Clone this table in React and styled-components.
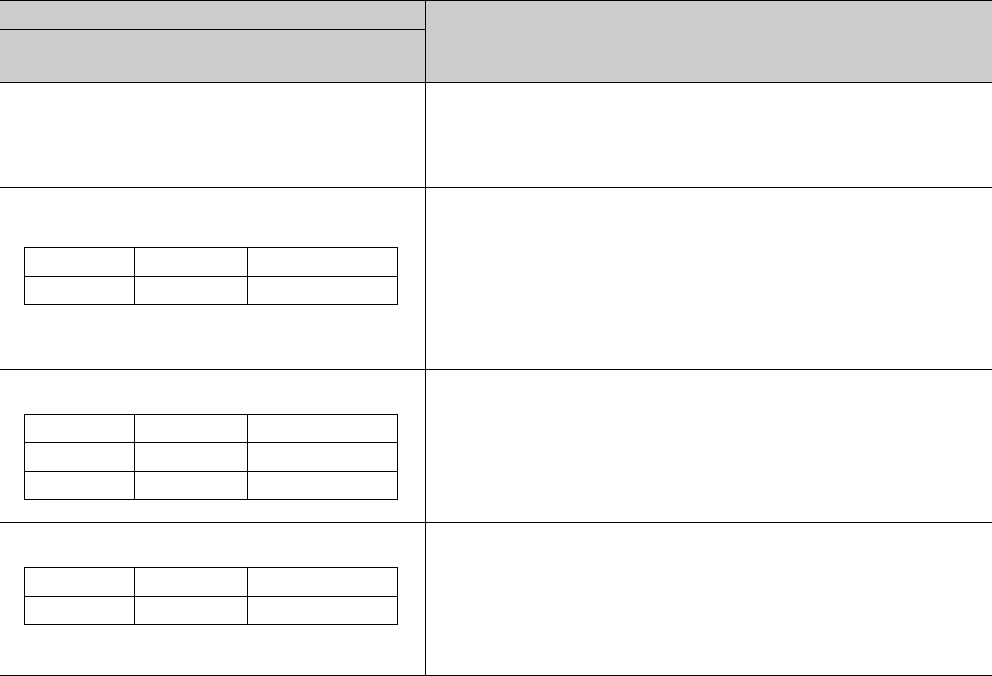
import React from "react";
import styled, { createGlobalStyle } from "styled-components";

const GlobalStyle = createGlobalStyle`
    html, body {
        margin: 0;
        padding: 0;
        background: #ffffff;
        font-family: "Liberation Sans", Arial, sans-serif;
    }
    * {
        box-sizing: border-box;
    }
`;

const sampleTables = [
    { top: 59, rows: [29, 28] },
    { top: 44, rows: [28, 29, 28] },
    { top: 44, rows: [29, 28] },
];

const bodyHeights = [105, 182, 153, 153];

function MiniTable({ rows }) {
    return (
        <Mini>
            {rows.map((h, i) => (
                <MiniRow key={i} height={h}>
                    <MiniCell width={110} />
                    <MiniCell width={113} />
                    <MiniCell width={150} />
                </MiniRow>
            ))}
        </Mini>
    );
}

function App() {
    return (
        <>
            <GlobalStyle />
            <Table>
                <HeaderRow>
                    <HeaderLeft>
                        <HeaderSub height={29} />
                        <HeaderSub height={52} last="true" />
                    </HeaderLeft>
                    <HeaderRight />
                </HeaderRow>
                {bodyHeights.map((h, i) => {
                    const sample = i > 0 ? sampleTables[i - 1] : null;
                    return (
                        <BodyRow key={i} height={h}>
                            <LeftCell top={sample ? sample.top : 0}>
                                {sample && <MiniTable rows={sample.rows} />}
                            </LeftCell>
                            <RightCell />
                        </BodyRow>
                    );
                })}
            </Table>
        </>
    );
}

export default App;

const Table = styled.div`
    width: 992px;
    border-top: 1px solid #000;
    display: flex;
    flex-direction: column;
`;

const HeaderRow = styled.div`
    display: flex;
    height: 82px;
    background: #cccccc;
    border-bottom: 1px solid #000;
`;

const HeaderLeft = styled.div`
    width: 426px;
    border-right: 1px solid #000;
    display: flex;
    flex-direction: column;
`;

const HeaderSub = styled.div`
    height: ${({ height }) => height}px;
    border-bottom: ${({ last }) => (last ? "none" : "1px solid #000")};
`;

const HeaderRight = styled.div`
    flex: 1;
`;

const BodyRow = styled.div`
    display: flex;
    height: ${({ height }) => height}px;
    border-bottom: 1px solid #000;
`;

const LeftCell = styled.div`
    width: 426px;
    border-right: 1px solid #000;
    padding: ${({ top }) => top}px 0 0 24px;
`;

const RightCell = styled.div`
    flex: 1;
`;

const Mini = styled.div`
    width: 374px;
    border-top: 1px solid #000;
    border-left: 1px solid #000;
    display: flex;
    flex-direction: column;
`;

const MiniRow = styled.div`
    display: flex;
    height: ${({ height }) => height}px;
`;

const MiniCell = styled.div`
    width: ${({ width }) => width}px;
    border-right: 1px solid #000;
    border-bottom: 1px solid #000;
`;
